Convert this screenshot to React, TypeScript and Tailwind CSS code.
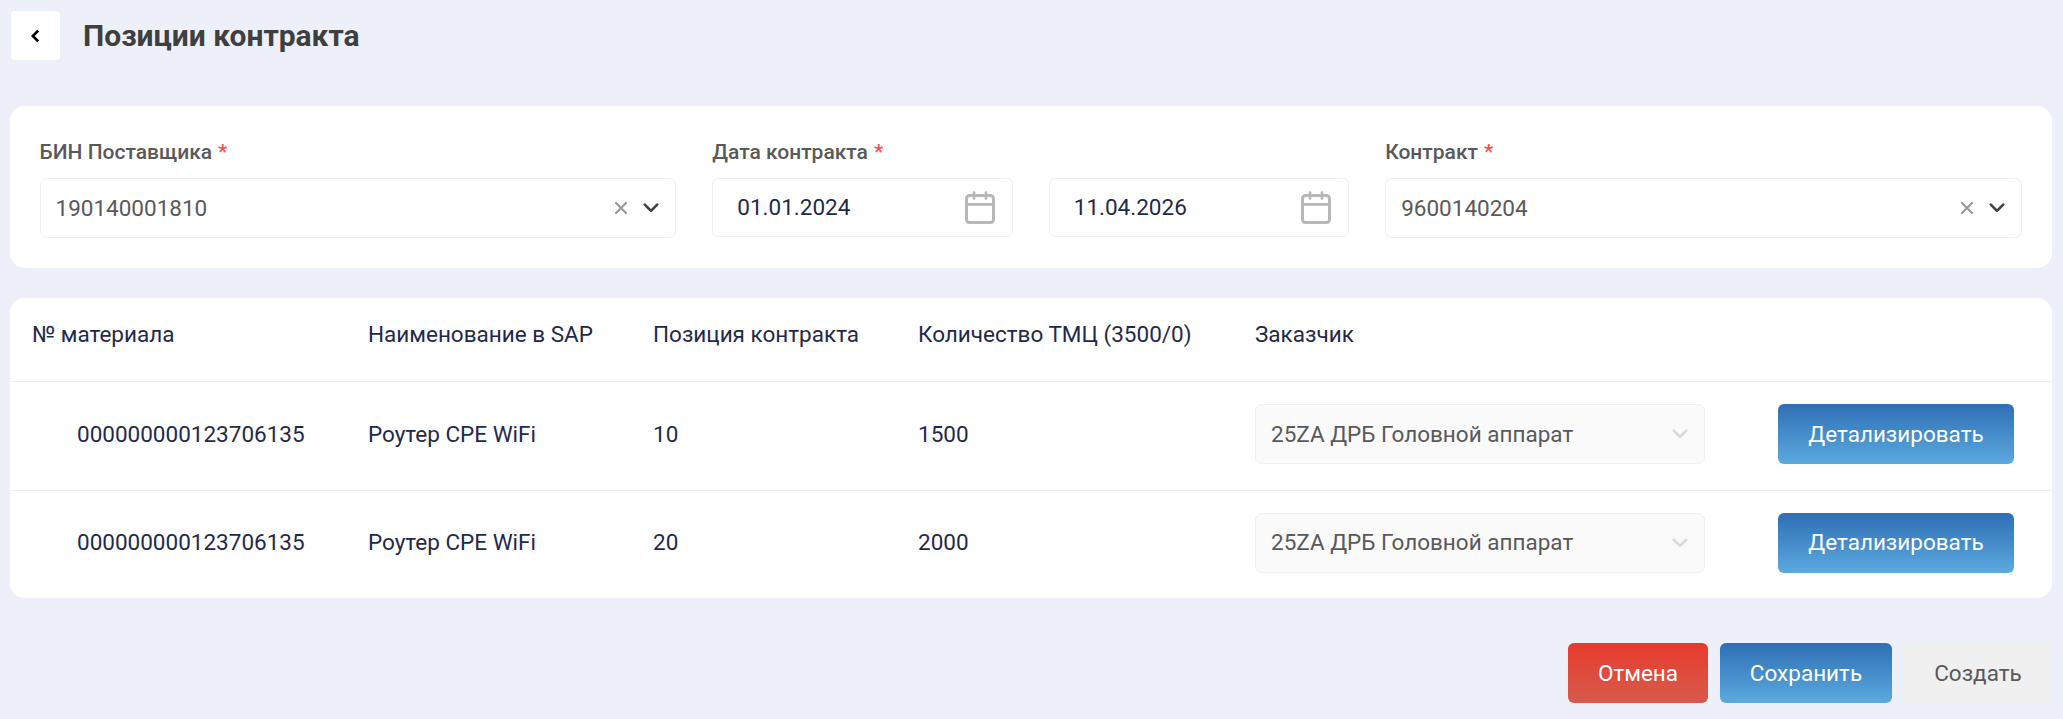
import type { ReactNode } from "react";

function Chevron({ className }: { className: string }) {
  return (
    <svg viewBox="0 0 16 10" className={className} fill="none" stroke="currentColor" strokeWidth="2.7" strokeLinecap="round" strokeLinejoin="round">
      <path d="M1.8 1.6 8 7.9 14.2 1.6" />
    </svg>
  );
}

function Cross() {
  return (
    <svg viewBox="0 0 14 14" className="h-3.5 w-3.5 text-[#999999]" fill="none" stroke="currentColor" strokeWidth="2.2" strokeLinecap="round">
      <path d="M2 2l10 10M12 2 2 12" />
    </svg>
  );
}

function CalendarIcon() {
  return (
    <svg viewBox="0 0 30 33" className="h-[33px] w-[30px] text-[#b8b8b8]" fill="none" stroke="currentColor" strokeWidth="3" strokeLinecap="round">
      <rect x="1.5" y="4.5" width="27" height="27" rx="3" />
      <path d="M1.5 13.4h27M9 1.5v6M21 1.5v6" strokeWidth="2.7" />
    </svg>
  );
}

function Label({ children }: { children: ReactNode }) {
  return (
    <div className="mb-[9px] flex h-[33px] items-center text-[21px] font-medium leading-[33px] text-[#595959]">
      {children}
      <span className="ml-[6px] font-medium text-[#ff4d4f]">*</span>
    </div>
  );
}

function SelectField({ value }: { value: string }) {
  return (
    <div className="flex h-[60px] items-center rounded-[7px] border border-[#f0f0f0] bg-white pr-[16px] pl-[15px]">
      <span className="grow text-[22.5px] text-[#595959]">{value}</span>
      <Cross />
      <Chevron className="ml-[15px] h-2.5 w-4 text-[#434343]" />
    </div>
  );
}

function DateField({ value }: { value: string }) {
  return (
    <div className="flex h-[59px] grow basis-0 items-center rounded-[6px] border border-[#f0f0f0] bg-white pr-[17px] pl-[24px]">
      <span className="grow pb-[2px] text-[22.5px] text-[#1f2a4a]">{value}</span>
      <CalendarIcon />
    </div>
  );
}

const tones = {
  blue: "bg-linear-to-b from-[#2f6fb5] to-[#5caade] text-white",
  red: "bg-linear-to-b from-[#e6392b] to-[#d75a4d] text-white",
  gray: "bg-[#f0f0f0] text-[#595959]",
};

function Button({ tone, width, children }: { tone: keyof typeof tones; width: string; children: ReactNode }) {
  return (
    <button className={`flex h-[60px] items-center justify-center rounded-[6px] text-[22.5px] ${width} ${tones[tone]}`}>
      {children}
    </button>
  );
}

const columns = "grid grid-cols-[336px_285px_265px_337px_523px_1fr] pl-[22px]";

const rows = [
  { id: 1, material: "000000000123706135", name: "Роутер CPE WiFi", position: "10", amount: "1500", textOffset: "pb-0" },
  { id: 2, material: "000000000123706135", name: "Роутер CPE WiFi", position: "20", amount: "2000", textOffset: "pb-[2px]" },
];

export default function App() {
  return (
    <div className="h-[719px] overflow-hidden bg-[#edf0f8] pt-[11px] pr-[11px] pl-[10px] font-['Roboto',sans-serif] leading-[30px]">
      <header className="flex h-[49px] items-center">
        <button className="ml-px flex h-[49px] w-[49px] items-center justify-center rounded-[4px] bg-white text-black">
          <svg viewBox="0 0 10 14" className="mr-[2px] h-3.5 w-2.5" fill="none" stroke="currentColor" strokeWidth="2.6">
            <path d="M8.2 1.6 2.8 7l5.4 5.4" />
          </svg>
        </button>
        <h1 className="ml-[23px] text-[30px] font-bold text-[#3f3f3f]">Позиции контракта</h1>
      </header>

      <section className="mt-[46px] flex h-[162px] gap-[36px] rounded-[15px] bg-white pt-[30px] pr-[30px] pl-[29.5px]">
        <div className="flex-1">
          <Label>БИН Поставщика</Label>
          <SelectField value="190140001810" />
        </div>
        <div className="flex-1">
          <Label>Дата контракта</Label>
          <div className="flex gap-[36px]">
            <DateField value="01.01.2024" />
            <DateField value="11.04.2026" />
          </div>
        </div>
        <div className="flex-1">
          <Label>Контракт</Label>
          <SelectField value="9600140204" />
        </div>
      </section>

      <section className="mt-[30px] h-[300px] rounded-[15px] bg-white text-[22.5px] text-[#1f2a4a]">
        <div className={`${columns} h-[84px] border-b border-[#f0f0f0] pt-[21px]`}>
          <span>№ материала</span>
          <span>Наименование в SAP</span>
          <span>Позиция контракта</span>
          <span>Количество ТМЦ (3500/0)</span>
          <span>Заказчик</span>
        </div>
        {rows.map((row) => (
          <div key={row.id} className={`${columns} h-[109px] items-start border-b border-[#f0f0f0] pt-[22px] last:border-b-0`}>
            <span className={`flex h-[60px] items-center pl-[45px] ${row.textOffset}`}>{row.material}</span>
            <span className={`flex h-[60px] items-center ${row.textOffset}`}>{row.name}</span>
            <span className={`flex h-[60px] items-center ${row.textOffset}`}>{row.position}</span>
            <span className={`flex h-[60px] items-center ${row.textOffset}`}>{row.amount}</span>
            <div className="flex h-[60px] w-[450px] items-center rounded-[7px] border border-[#f0f0f0] bg-[#fafafa] pr-[16px] pl-[15px] text-[#595959]">
              <span className={`grow ${row.textOffset}`}>25ZA ДРБ Головной аппарат</span>
              <Chevron className="h-2.5 w-4 text-[#d9d9d9]" />
            </div>
            <Button tone="blue" width={row.id === 2 ? "w-[236px] pb-[2px]" : "w-[236px]"}>Детализировать</Button>
          </div>
        ))}
      </section>

      <footer className="mt-[45px] flex justify-end gap-[12px]">
        <Button tone="red" width="w-[140px]">Отмена</Button>
        <Button tone="blue" width="w-[172px]">Сохранить</Button>
        <Button tone="gray" width="w-[148px]">Создать</Button>
      </footer>
    </div>
  );
}
